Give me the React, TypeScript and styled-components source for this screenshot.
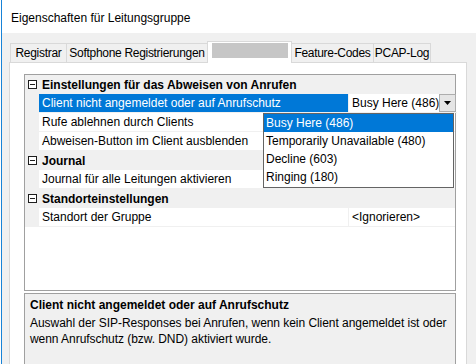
import React from 'react';
import styled, { createGlobalStyle } from 'styled-components';

const GlobalStyle = createGlobalStyle`
  html, body { margin: 0; padding: 0; background: #ffffff; }
  body {
    font-family: "Liberation Sans", Arial, sans-serif;
    font-size: 12px;
    color: #000000;
  }
  * { box-sizing: border-box; }
`;

const BLUE = '#0078d7';

const tabs = [
  { label: 'Registrar', width: 57 },
  { label: 'Softphone Registrierungen', width: 142 },
  { label: '', width: 85, selected: true },
  { label: 'Feature-Codes', width: 83 },
  { label: 'PCAP-Log', width: 58 },
];

const options = ['Busy Here (486)', 'Temporarily Unavailable (480)', 'Decline (603)', 'Ringing (180)'];

function MinusBox() {
  return (
    <svg width="9" height="9" viewBox="0 0 9 9">
      <rect x="0.5" y="0.5" width="8" height="8" fill="#ffffff" stroke="#1e1e1e" />
      <line x1="2" y1="4.5" x2="7" y2="4.5" stroke="#1e1e1e" />
    </svg>
  );
}

function DownArrow() {
  return (
    <svg width="7" height="4" viewBox="0 0 7 4">
      <polygon points="0,0 7,0 3.5,4" fill="#000000" />
    </svg>
  );
}

function Category({ title }: { title: string }) {
  return (
    <CategoryRow>
      <Margin>
        <MinusBox />
      </Margin>
      <CategoryTitle>{title}</CategoryTitle>
    </CategoryRow>
  );
}

function Property({ label, value, selected, children }: { label: string; value?: string; selected?: boolean; children?: React.ReactNode }) {
  return (
    <PropRow>
      <Margin />
      <Label $selected={selected}>{label}</Label>
      <Value>
        <span>{value}</span>
        {children}
      </Value>
    </PropRow>
  );
}

export default function App() {
  return (
    <>
      <GlobalStyle />
      <Window>
        <TitleBar>Eigenschaften für Leitungsgruppe</TitleBar>
        <Body>
          <TabStrip>
            {tabs.map((t, i) => (
              <Tab key={i} $width={t.width} $selected={t.selected}>
                {t.selected ? <Redacted /> : t.label}
              </Tab>
            ))}
          </TabStrip>
          <TabPanel>
            <Grid>
              <Category title="Einstellungen für das Abweisen von Anrufen" />
              <Property label="Client nicht angemeldet oder auf Anrufschutz" value="Busy Here (486)" selected>
                <DropButton>
                  <DownArrow />
                </DropButton>
              </Property>
              <Property label="Rufe ablehnen durch Clients" />
              <Property label="Abweisen-Button im Client ausblenden" />
              <Category title="Journal" />
              <Property label="Journal für alle Leitungen aktivieren" />
              <Category title="Standorteinstellungen" />
              <Property label="Standort der Gruppe" value="<Ignorieren>" />
              <DropList>
                {options.map((o, i) => (
                  <DropItem key={o} $active={i === 0}>{o}</DropItem>
                ))}
              </DropList>
            </Grid>
            <Description>
              <DescTitle>Client nicht angemeldet oder auf Anrufschutz</DescTitle>
              <DescText>
                Auswahl der SIP-Responses bei Anrufen, wenn kein Client angemeldet ist oder wenn Anrufschutz (bzw. DND) aktiviert wurde.
              </DescText>
            </Description>
          </TabPanel>
        </Body>
      </Window>
    </>
  );
}

const Window = styled.div`
  width: 475px;
  height: 364px;
  margin-left: 1px;
  border-left: 1px solid #1883d7;
  background: #f0f0f0;
  display: flex;
  flex-direction: column;
  overflow: hidden;
`;

const TitleBar = styled.div`
  height: 33px;
  flex: 0 0 33px;
  background: #ffffff;
  padding: 2px 0 0 9px;
  display: flex;
  align-items: center;
`;

const Body = styled.div`
  flex: 1;
  display: flex;
  flex-direction: column;
  padding: 8px 0 0 7px;
  min-height: 0;
`;

const TabStrip = styled.div`
  display: flex;
  align-items: flex-end;
  height: 22px;
  margin-bottom: -1px;
  padding-left: 1px;
  position: relative;
  z-index: 1;
`;

const Tab = styled.div<{ $width: number; $selected?: boolean }>`
  width: ${p => p.$width}px;
  height: ${p => (p.$selected ? 22 : 20)}px;
  margin-left: -1px;
  &:first-child { margin-left: 0; }
  border: 1px solid #d9d9d9;
  border-bottom: ${p => (p.$selected ? 'none' : '1px solid #d9d9d9')};
  background: ${p => (p.$selected ? '#ffffff' : '#f0f0f0')};
  position: relative;
  z-index: ${p => (p.$selected ? 2 : 1)};
  display: flex;
  justify-content: center;
  align-items: ${p => (p.$selected ? 'flex-start' : 'center')};
  padding-top: ${p => (p.$selected ? 1 : 0)}px;
  letter-spacing: -0.3px;
  white-space: nowrap;
`;

const Redacted = styled.div`
  width: 76px;
  height: 15px;
  background: #c6c6c6;
`;

const TabPanel = styled.div`
  width: 458px;
  flex: 1;
  background: #ffffff;
  border: 1px solid #d9d9d9;
  border-bottom: none;
  padding: 11px 10px 0 14px;
  display: flex;
  flex-direction: column;
  min-height: 0;
`;

const Grid = styled.div`
  position: relative;
  height: 217px;
  flex: 0 0 217px;
  border: 1px solid #a0a0a0;
  background: #ffffff;
`;

const CategoryRow = styled.div`
  height: 19px;
  display: flex;
  align-items: center;
  background: #f0f0f0;
`;

const Margin = styled.div`
  width: 14px;
  flex: 0 0 14px;
  height: 100%;
  background: #f0f0f0;
  display: flex;
  align-items: center;
  padding-left: 3px;
`;

const CategoryTitle = styled.div`
  font-weight: bold;
  padding-left: 3px;
`;

const PropRow = styled.div`
  height: 19px;
  display: flex;
`;

const Label = styled.div<{ $selected?: boolean }>`
  flex: 0 0 309px;
  height: 100%;
  display: flex;
  align-items: center;
  padding-left: 3px;
  border-bottom: 1px solid #f0f0f0;
  background: ${p => (p.$selected ? BLUE : '#ffffff')};
  color: ${p => (p.$selected ? '#ffffff' : '#000000')};
  white-space: nowrap;
  overflow: hidden;
`;

const Value = styled.div`
  flex: 1;
  height: 100%;
  display: flex;
  align-items: center;
  justify-content: space-between;
  padding-left: 3px;
  padding-right: 1px;
  border-left: 1px solid #f0f0f0;
  border-bottom: 1px solid #f0f0f0;
  white-space: nowrap;
`;

const DropButton = styled.div`
  width: 17px;
  height: 18px;
  align-self: flex-start;
  background: #e5e5e5;
  border: 1px solid #adadad;
  display: flex;
  align-items: center;
  justify-content: center;
`;

const DropList = styled.div`
  position: absolute;
  left: 238px;
  top: 38px;
  width: 191px;
  height: 75px;
  background: #ffffff;
  border: 1px solid #646464;
  z-index: 5;
`;

const DropItem = styled.div<{ $active?: boolean }>`
  height: 18px;
  display: flex;
  align-items: center;
  padding-left: 2px;
  background: ${p => (p.$active ? BLUE : 'transparent')};
  color: ${p => (p.$active ? '#ffffff' : '#000000')};
  white-space: nowrap;
`;

const Description = styled.div`
  margin-top: 2px;
  flex: 1;
  background: #f0f0f0;
  border: 1px solid #a0a0a0;
  border-bottom: none;
  padding: 3px 2px 0 5px;
`;

const DescTitle = styled.div`
  font-weight: bold;
  line-height: 16px;
  margin-bottom: 2px;
`;

const DescText = styled.div`
  line-height: 16px;
  letter-spacing: -0.05px;
`;
